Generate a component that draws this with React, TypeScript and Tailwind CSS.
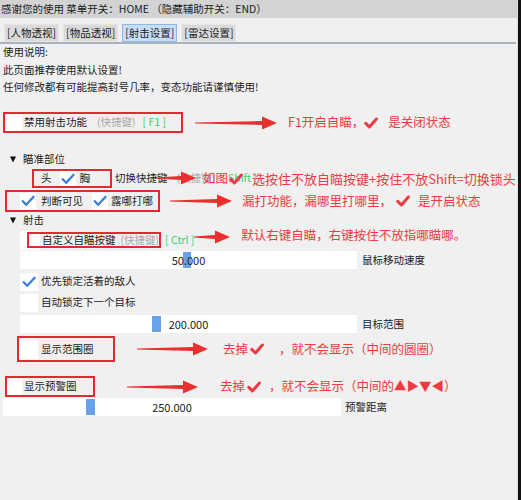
import React from "react";

const RED = "#ee3b40";

function Check() {
  return (
    <svg width="14" height="12" viewBox="0 0 14 12" className="shrink-0">
      <path d="M1.8 6.2 L5.2 9.8 L12.6 1.8" fill="none" stroke="#3b7dd8" strokeWidth="2.3" strokeLinecap="round" strokeLinejoin="round" />
    </svg>
  );
}

function RedCheck({ className = "" }: { className?: string }) {
  return (
    <svg width="14" height="12" viewBox="0 0 14 12" className={"shrink-0 " + className}>
      <path d="M1.8 6.4 L5.4 10 L12.4 2" fill="none" stroke={RED} strokeWidth="3" strokeLinecap="round" strokeLinejoin="round" />
    </svg>
  );
}

function Arrow({ w, className = "" }: { w: number; className?: string }) {
  const hw = 15;
  const pts = `0,6.4 ${w - hw},5 ${w - hw},0.5 ${w},7 ${w - hw},13.5 ${w - hw},9 0,7.6`;
  return (
    <svg width={w} height={14} viewBox={`0 0 ${w} 14`} className={"shrink-0 " + className}>
      <polygon points={pts} fill="#e8302f" />
    </svg>
  );
}

function Tri({ className = "" }: { className?: string }) {
  return (
    <svg width="6" height="7" viewBox="0 0 6 7" className={"shrink-0 " + className}>
      <polygon points="0,0.5 6,0.5 3,6.5" fill="#111" />
    </svg>
  );
}

function Slider({
  rowClass,
  barClass,
  thumbLeft,
  thumbW,
  value,
  label,
  labelClass,
}: {
  rowClass: string;
  barClass: string;
  thumbLeft: number;
  thumbW: number;
  value: string;
  label: string;
  labelClass: string;
}) {
  return (
    <div className={"flex items-center h-[18px] whitespace-nowrap " + rowClass}>
      <div className={"relative h-[18px] bg-white flex items-center justify-center " + barClass}>
        <div className="absolute top-[1px] bottom-[1px] bg-[#67a2ec]" style={{ left: thumbLeft, width: thumbW }} />
        <span className="relative text-[11px] text-[#1b1b1b]">{value}</span>
      </div>
      <span className={labelClass}>{label}</span>
    </div>
  );
}

const gray = "text-[#a9a9a9]";
const green = "text-[#36d26a]";
const ann = "text-[#ee3b40] text-[12.5px] flex items-center whitespace-nowrap";

export default function App() {
  return (
    <div className="w-[521px] h-[500px] flex overflow-hidden bg-[#f0f0f0] text-[#1b1b1b] text-[10.5px] leading-none font-['Noto_Sans_CJK_SC','Noto_Sans',sans-serif]">
      <div className="flex-1 flex flex-col border-r border-[#e0e0e0] min-w-0">
        {/* title */}
        <div className="h-[18px] bg-[#d3d3d3] flex items-center pl-[1px] whitespace-nowrap">
          感谢您的使用 菜单开关：HOME （隐藏辅助开关：END）
        </div>
        {/* tabs */}
        <div className="h-[24px] flex items-end gap-[4px] pl-[4px]">
          <div className="h-[18px] px-[2px] flex items-center bg-[#dadada] border border-[#e6e6e6]">[人物透视]</div>
          <div className="h-[18px] px-[2px] flex items-center bg-[#dadada] border border-[#e6e6e6]">[物品透视]</div>
          <div className="h-[18px] px-[2px] flex items-center bg-[#c8ddf3] border border-[#8db8e6]">[射击设置]</div>
          <div className="h-[18px] px-[2px] flex items-center bg-[#dadada] border border-[#e6e6e6]">[雷达设置]</div>
        </div>
        <div className="h-[2px] bg-[#a9b4bf] mr-[1px]" />

        {/* intro */}
        <div className="pl-[3px] flex flex-col">
          <div className="h-[17px] flex items-center">使用说明:</div>
          <div className="h-[18px] flex items-center">此页面推荐使用默认设置!</div>
          <div className="h-[17px] flex items-center">任何修改都有可能提高封号几率，变态功能请谨慎使用!</div>
        </div>

        {/* F1 row */}
        <div className="mt-[16px] h-[21px] flex items-center whitespace-nowrap">
          <div className="ml-[3px] w-[180px] h-[21px] border-2 border-[#e12b33] flex items-center shrink-0">
            <div className="ml-[2px] w-[15px] h-[16px] bg-white" />
            <span className="ml-[2px]">禁用射击功能</span>
            <span className={"ml-[10px] " + gray}>(快捷键)</span>
            <span className={"ml-[7px] " + green}>[ F1 ]</span>
          </div>
          <Arrow w={82} className="ml-[12px]" />
          <span className={"ml-[11px] " + ann}>
            F1开启自瞄，
            <RedCheck />
            <span className="ml-[10px]">是关闭状态</span>
          </span>
        </div>

        {/* 瞄准部位 */}
        <div className="mt-[17px] h-[18px] flex items-center">
          <Tri className="ml-[10px]" />
          <span className="ml-[7px]">瞄准部位</span>
        </div>

        {/* 头 胸 row */}
        <div className="relative mt-[1px] h-[19px] flex items-center whitespace-nowrap">
          <div className="ml-[32px] w-[80px] h-[19px] border-2 border-[#e12b33] flex items-center shrink-0">
            <span className="ml-[7px]">头</span>
            <div className="ml-[8px] w-[16px] h-[15px] bg-white flex items-center justify-center">
              <Check />
            </div>
            <span className="ml-[4px]">胸</span>
          </div>
          <span className="ml-[3px]">切换快捷键</span>
          <span className={"ml-[9px] " + gray}>(快捷键)</span>
          <span className={"ml-[7px] " + green}>[ Shift ]</span>
          <Arrow w={40} className="absolute left-[156px] top-[2px]" />
          <div className={"absolute left-[203px] top-0 h-full " + ann}>
            <span>如图</span>
            <RedCheck className="ml-[1px]" />
            <span className="ml-[9px] text-[13px]">选按住不放自瞄按键+按住不放Shift=切换锁头</span>
          </div>
        </div>

        {/* 判断可见 row */}
        <div className="mt-[2px] h-[22px] flex items-center whitespace-nowrap">
          <div className="ml-[5px] w-[155px] h-[22px] border-2 border-[#e12b33] flex items-center shrink-0">
            <div className="ml-[13px] w-[16px] h-[17px] bg-white flex items-center justify-center">
              <Check />
            </div>
            <span className="ml-[5px]">判断可见</span>
            <div className="ml-[9px] w-[16px] h-[17px] bg-white flex items-center justify-center">
              <Check />
            </div>
            <span className="ml-[3px]">露哪打哪</span>
          </div>
          <Arrow w={62} className="ml-[10px]" />
          <span className={"ml-[10px] " + ann}>
            漏打功能，漏哪里打哪里，
            <RedCheck className="ml-[4px]" />
            <span className="ml-[8px]">是开启状态</span>
          </span>
        </div>

        {/* 射击 */}
        <div className="h-[17px] flex items-center">
          <Tri className="ml-[10px]" />
          <span className="ml-[7px]">射击</span>
        </div>

        {/* 自定义自瞄按键 */}
        <div className="relative mt-[1px] h-[20px] flex items-center whitespace-nowrap">
          <div className="ml-[20px] w-[20px] h-[19px] bg-white" />
          <span className="ml-[2px]">自定义自瞄按键</span>
          <span className={"ml-[5px] " + gray}>(快捷键)</span>
          <span className={"ml-[6px] " + green}>[ Ctrl ]</span>
          <Arrow w={36} className="relative -top-[3px]" />
          <span className={"ml-[11px] relative -top-[5px] " + ann}>默认右键自瞄，右键按住不放指哪瞄哪。</span>
          <div className="absolute left-[27px] top-[2px] w-[134px] h-[16px] border-2 border-[#e12b33]" />
        </div>

        <Slider
          rowClass="mt-[1px]"
          barClass="ml-[20px] w-[337px]"
          thumbLeft={163}
          thumbW={8}
          value="50.000"
          label="鼠标移动速度"
          labelClass="ml-[5px]"
        />

        {/* 优先锁定 */}
        <div className="mt-[3px] h-[19px] flex items-center whitespace-nowrap">
          <div className="ml-[20px] w-[18px] h-[18px] bg-white flex items-center justify-center">
            <Check />
          </div>
          <span className="ml-[3px]">优先锁定活着的敌人</span>
        </div>
        {/* 自动锁定 */}
        <div className="mt-[2px] h-[19px] flex items-center whitespace-nowrap">
          <div className="ml-[20px] w-[18px] h-[18px] bg-white" />
          <span className="ml-[3px]">自动锁定下一个目标</span>
        </div>

        <Slider
          rowClass="mt-[3px]"
          barClass="ml-[20px] w-[337px]"
          thumbLeft={132}
          thumbW={9}
          value="200.000"
          label="目标范围"
          labelClass="ml-[5px]"
        />

        {/* 显示范围圈 */}
        <div className="mt-[3px] h-[26px] flex items-center whitespace-nowrap">
          <div className="ml-[17px] w-[98px] h-[26px] border-2 border-[#e12b33] flex items-center shrink-0">
            <div className="ml-[1px] w-[18px] h-[19px] bg-white" />
            <span className="ml-[3px]">显示范围圈</span>
          </div>
          <Arrow w={71} className="ml-[22px]" />
          <span className={"ml-[15px] " + ann}>
            去掉
            <RedCheck className="ml-[2px]" />
            <span className="ml-[15px]">，就不会显示（中间的圆圈）</span>
          </span>
        </div>

        {/* 显示预警圈 */}
        <div className="mt-[14px] h-[21px] flex items-center whitespace-nowrap">
          <div className="ml-[5px] w-[90px] h-[21px] border-2 border-[#e12b33] flex items-center shrink-0">
            <div className="w-[15px] h-[16px] bg-white" />
            <span className="ml-[2px]">显示预警圈</span>
          </div>
          <Arrow w={71} className="ml-[32px]" />
          <span className={"ml-[22px] " + ann}>
            去掉
            <RedCheck className="ml-[2px]" />
            <span className="ml-[8px]">，就不会显示（中间的▲▶▼◀）</span>
          </span>
        </div>

        <Slider
          rowClass="mt-[1px]"
          barClass="ml-[3px] w-[338px]"
          thumbLeft={83}
          thumbW={9}
          value="250.000"
          label="预警距离"
          labelClass="ml-[4px]"
        />
      </div>
      <div className="w-[3px] bg-[#121212] shrink-0" />
    </div>
  );
}
